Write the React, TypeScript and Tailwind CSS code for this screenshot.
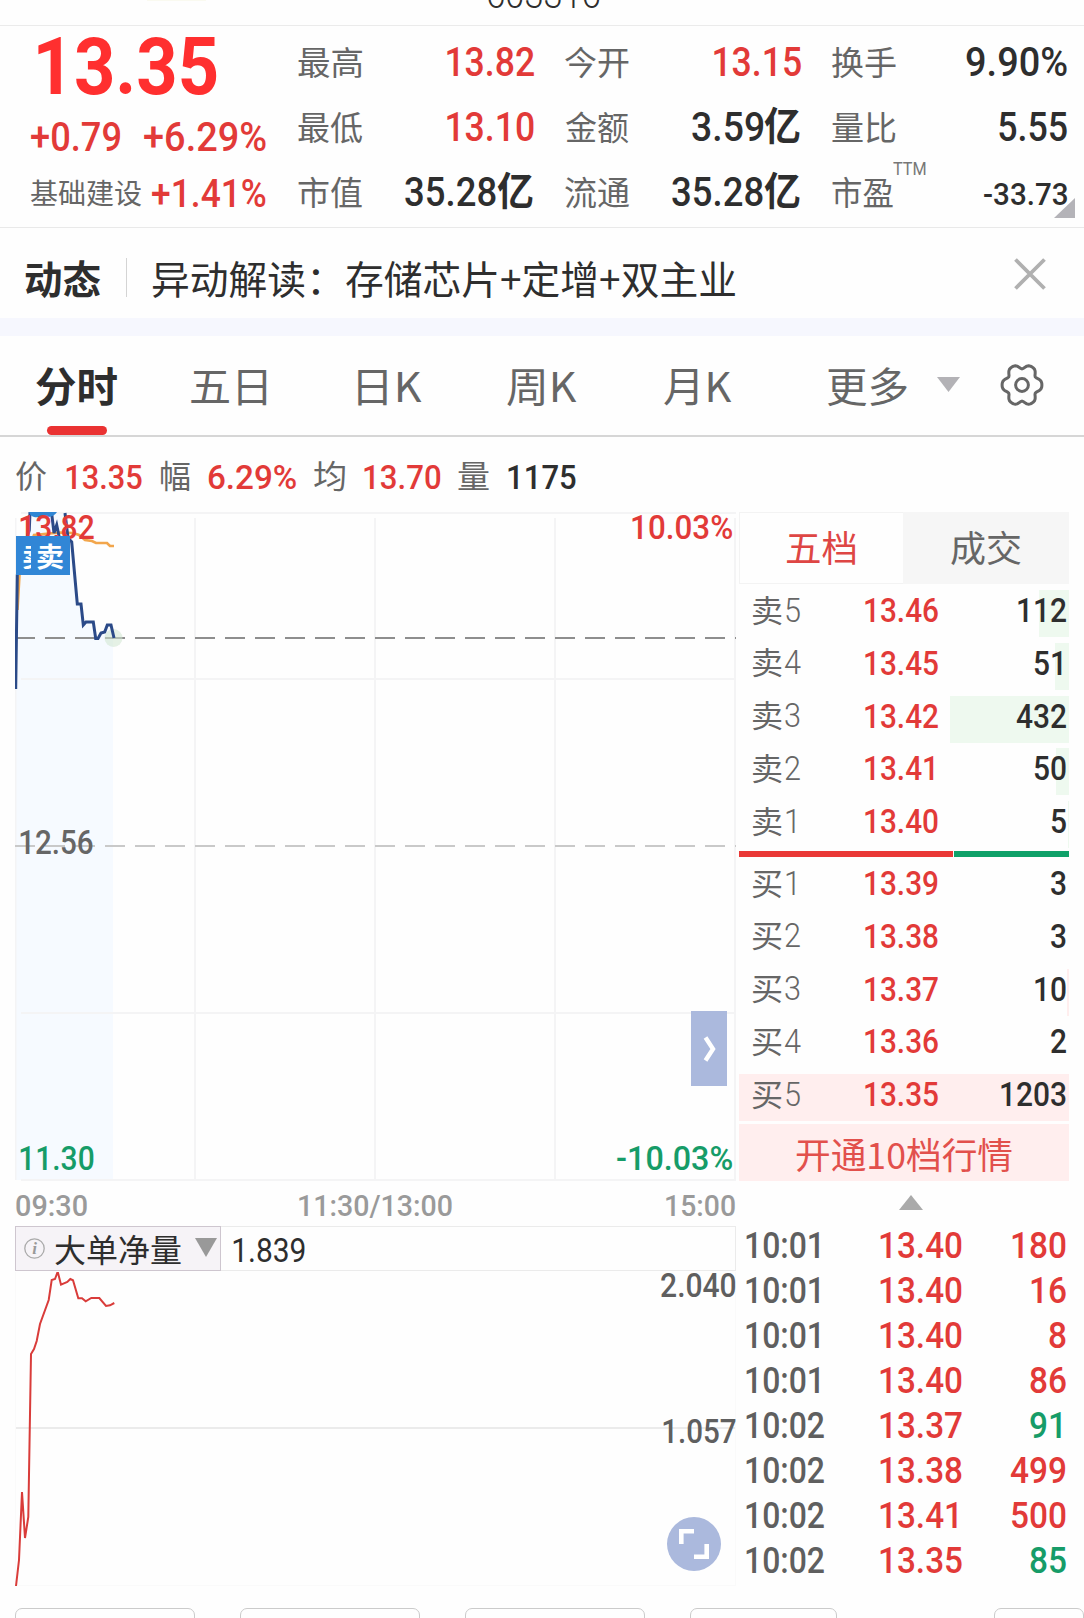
import { useLayoutEffect, useRef, useState } from "react";
import type { ReactNode } from "react";

type FitProps = { t: string; w: number; c: string; adv?: boolean };

/* Text squeezed horizontally to an exact width. By default the visible ink is
   fitted; with `adv` the advance width is fitted instead (tabular columns). */
function Fit({ t, w, c, adv }: FitProps) {
  const ref = useRef<HTMLSpanElement>(null);
  const [tf, setTf] = useState("none");
  useLayoutEffect(() => {
    const el = ref.current;
    const ctx = document.createElement("canvas").getContext("2d");
    if (!el || !ctx) return;
    const s = getComputedStyle(el);
    ctx.font = `${s.fontWeight} ${s.fontSize} ${s.fontFamily}`;
    const m = ctx.measureText(t);
    const left = adv ? 0 : m.actualBoundingBoxLeft;
    const nat = adv ? m.width : m.actualBoundingBoxLeft + m.actualBoundingBoxRight;
    const k = w / nat;
    setTf(`translateX(${left * k}px) scaleX(${k})`);
  }, [t, w, adv]);
  return (
    <span className="block shrink-0 whitespace-nowrap leading-none" style={{ width: w }}>
      <span ref={ref} className={`inline-block origin-left leading-none ${c}`} style={{ transform: tf }}>
        {t}
      </span>
    </span>
  );
}

const CJK = "font-['Noto_Sans_CJK_SC',sans-serif]";
const NUM = "font-['Roboto','Noto_Sans_CJK_SC',sans-serif]";
const statLabel = `${CJK} text-[33px] text-[#666]`;
const red = "text-[#e23a38]";
const green = "text-[#169c68]";
const ink = "text-[#2e2e2e]";

function Stat({ label, lw, sup, children }: { label: string; lw: number; sup?: string; children: ReactNode }) {
  return (
    <div className="flex h-[65px] items-center justify-between">
      <div className="relative -top-[1px]">
        <Fit t={label} w={lw} c={statLabel} />
        {sup && (
          <div className="absolute -top-[15px] left-[61px]">
            <Fit t={sup} w={33} c={`${NUM} text-[18px] text-[#777]`} />
          </div>
        )}
      </div>
      {children}
    </div>
  );
}

function Yi({ n, w }: { n: string; w: number }) {
  return (
    <div className="flex items-center gap-[1px] pr-px">
      <Fit t={n} w={w - 38} c={`${NUM} text-[41px] font-medium ${ink}`} />
      <div className="relative -top-[4px]">
        <Fit t="亿" w={36} c={`${CJK} text-[39px] font-bold ${ink}`} />
      </div>
    </div>
  );
}

const big = `${NUM} text-[41px] font-medium`;

function Header() {
  return (
    <section className="flex h-[202px] border-b border-[#e9e9e9] pt-[4px]">
      <div className="w-[298px] shrink-0">
        <div className="flex h-[73px] items-center pl-[38px] pt-[2px]">
          <Fit t="13.35" w={179} c={`${NUM} text-[79px] font-bold text-[#ff2f2f]`} />
        </div>
        <div className="flex h-[67px] items-center gap-[24px] pl-[31px] pt-[2px]">
          <Fit t="+0.79" w={89} c={`${big} ${red}`} />
          <Fit t="+6.29%" w={122} c={`${big} ${red}`} />
        </div>
        <div className="flex h-[46px] items-center justify-between pl-[31px] pr-[32px]">
          <div className="relative -top-[1px]"><Fit t="基础建设" w={110} c={`${CJK} text-[28px] text-[#666]`} /></div>
          <div className="relative top-[1px]"><Fit t="+1.41%" w={114} c={`${NUM} text-[38px] font-medium ${red}`} /></div>
        </div>
      </div>
      <div className="w-[236px]">
        <Stat label="最高" lw={64}><Fit t="13.82" w={87} c={`${big} ${red}`} /></Stat>
        <Stat label="最低" lw={64}><Fit t="13.10" w={87} c={`${big} ${red}`} /></Stat>
        <Stat label="市值" lw={64}><Yi n="35.28" w={129} /></Stat>
      </div>
      <div className="ml-[31px] w-[236px]">
        <Stat label="今开" lw={64}><Fit t="13.15" w={87} c={`${big} ${red}`} /></Stat>
        <Stat label="金额" lw={64}><Yi n="3.59" w={109} /></Stat>
        <Stat label="流通" lw={64}><Yi n="35.28" w={129} /></Stat>
      </div>
      <div className="relative ml-[31px] w-[235px]">
        <Stat label="换手" lw={64}><Fit t="9.90%" w={101} c={`${big} ${ink}`} /></Stat>
        <Stat label="量比" lw={64}><Fit t="5.55" w={68} c={`${big} ${ink}`} /></Stat>
        <Stat label="市盈" lw={61} sup="TTM">
          <div className="pt-[3px]"><Fit t="-33.73" w={83} c={`${NUM} text-[31px] font-medium ${ink}`} /></div>
        </Stat>
        <svg className="absolute -right-[8px] top-[168px]" width="21" height="20" viewBox="0 0 21 20">
          <path d="M21 0V20H0Z" fill="#b4b3b8" />
        </svg>
      </div>
    </section>
  );
}

function News() {
  return (
    <section className="flex h-[90px] items-center pl-[25px] pr-[38px] pt-[8px]">
      <Fit t="动态" w={76} c={`${CJK} text-[39px] font-bold ${ink}`} />
      <div className="ml-[25px] h-[39px] w-px bg-[#d4d4d4]" />
      <div className="ml-[26px] grow">
        <Fit t="异动解读：存储芯片+定增+双主业" w={582} c={`${CJK} text-[39px] ${ink}`} />
      </div>
      <svg className="relative -top-[3px]" width="32" height="32" viewBox="0 0 32 32" fill="none" stroke="#b0b0b0" strokeWidth="3.8">
        <path d="M1.5 1.5L30.5 30.5M30.5 1.5L1.5 30.5" />
      </svg>
    </section>
  );
}

const gear =
  Array.from({ length: 72 }, (_, i) => {
    const a = (i * Math.PI) / 36;
    const r = 18.1 + 2.3 * Math.cos(6 * a) - 0.5 * Math.cos(12 * a);
    return `${i ? "L" : "M"}${(22 + r * Math.cos(a)).toFixed(2)} ${(22 + r * 1.05 * Math.sin(a)).toFixed(2)}`;
  }).join("") + "Z";

function Tabs() {
  const tab = `${CJK} text-[41px] text-[#666]`;
  return (
    <nav className="relative flex h-[101px] items-center border-b-2 border-[#d6d6d6] pl-[36px] pb-[2px]">
      <Fit t="分时" w={81} c={`${CJK} text-[41px] font-bold ${ink}`} />
      <div className="ml-[74px]"><Fit t="五日" w={76} c={tab} /></div>
      <div className="ml-[91px]"><Fit t="日K" w={64} c={tab} /></div>
      <div className="ml-[85px]"><Fit t="周K" w={70} c={tab} /></div>
      <div className="ml-[87px]"><Fit t="月K" w={68} c={tab} /></div>
      <div className="ml-[95px]"><Fit t="更多" w={80} c={tab} /></div>
      <svg className="ml-[30px]" width="23" height="15" viewBox="0 0 23 15"><path d="M0 0H23L11.5 15Z" fill="#b3b2b6" /></svg>
      <svg className="ml-[40px]" width="44" height="44" viewBox="0 0 44 44" fill="none" stroke="#666" strokeWidth="3">
        <path d={gear} strokeLinejoin="round" />
        <circle cx="22" cy="22" r="6.4" />
      </svg>
      <div className="absolute bottom-0 left-[47px] h-[9px] w-[60px] rounded-full bg-[#ea3232]" />
    </nav>
  );
}

function Quote() {
  const l = `${CJK} text-[32px] text-[#666]`;
  const n = `${NUM} text-[33px] font-medium`;
  const up = "relative -top-[3px]";
  return (
    <div className="flex h-[75px] items-center pl-[16px] pt-[5px]">
      <div className={up}><Fit t="价" w={31} c={l} /></div>
      <div className="ml-[19px]"><Fit t="13.35" w={76} c={`${n} ${red}`} /></div>
      <div className={`${up} ml-[19px]`}><Fit t="幅" w={29} c={l} /></div>
      <div className="ml-[18px]"><Fit t="6.29%" w={88} c={`${n} ${red}`} /></div>
      <div className={`${up} ml-[18px]`}><Fit t="均" w={31} c={l} /></div>
      <div className="ml-[19px]"><Fit t="13.70" w={77} c={`${n} ${red}`} /></div>
      <div className={`${up} ml-[17px]`}><Fit t="量" w={31} c={l} /></div>
      <div className="ml-[19px]"><Fit t="1175" w={68} c={`${n} ${ink}`} /></div>
    </div>
  );
}

function PriceChart() {
  const n = `${NUM} text-[33px] font-medium`;
  return (
    <div className="relative h-[669px] w-[721px]">
      <svg className="block" width="721" height="669" viewBox="15 512 721 669" fill="none">
        <path d="M16 1180V640L17.5 575L29.5 512H66L72 542L77 604H81L83 625L86 622H93L96 638L98 638L105 632L107 625H111L113 638V1180Z" fill="#f6faff" />
        <path d="M21 513H736M21 679H736M21 1013H736M21 1180H736M15.5 518V1180M195 518V1180M375 518V1180M555 518V1180M735 518V1180" stroke="#f4f4f5" strokeWidth="2" />
        <path d="M15 638H736" stroke="#8e8e8e" strokeWidth="2" strokeDasharray="20 10" />
        <path d="M15 846H736" stroke="#c9c9c9" strokeWidth="2" strokeDasharray="20 10" />
        <circle cx="113.5" cy="638" r="9" fill="#cfe6cf" fillOpacity="0.55" />
        <path d="M17.5 610L19.5 575L34 535L60 532.5L73 533L79 535L85 540L92 541L96 543H107L110 546H114" stroke="#f2a64c" strokeWidth="2.6" />
        <path d="M15.7 689L17.3 575L29.3 530L30 512M51.5 512L54 533L56.7 525L60 541M65 513L68 538L71.7 542L77.3 604H81L83.3 625L86 622H93.3L95.7 638.5H98L101 633L104.7 632L107.3 625H111L114 638" stroke="#2b4a88" strokeWidth="3" />
        <path d="M29 512H57Q54 517 47 517Q43 517 41 516Q38 518 34 517Q30 516 29 512Z" fill="#2f86d4" />
      </svg>
      <div className="absolute left-[5px] top-[-1px]"><Fit t="13.82" w={74} c={`${n} ${red}`} /></div>
      <div className="absolute left-px top-[24px] flex h-[39px] w-[54px] items-center bg-[#3186d6] pb-px pl-[7px]">
        <div className="w-[8px] overflow-hidden"><Fit t="卖" w={25} c={`${CJK} text-[27px] font-bold text-white`} /></div>
        <div className="ml-[6px]"><Fit t="卖" w={26} c={`${CJK} text-[27px] font-bold text-white`} /></div>
      </div>
      <div className="absolute right-[4px] top-[-1px]"><Fit t="10.03%" w={100} c={`${n} ${red}`} /></div>
      <div className="absolute left-[5px] top-[314px]"><Fit t="12.56" w={73} c={`${n} text-[#666]`} /></div>
      <div className="absolute left-[5px] top-[630px]"><Fit t="11.30" w={74} c={`${n} ${green}`} /></div>
      <div className="absolute right-[4px] top-[630px]"><Fit t="-10.03%" w={115} c={`${n} ${green}`} /></div>
      <div className="absolute right-[9px] top-[499px] flex h-[75px] w-[36px] items-center justify-center bg-[#abb9dd]">
        <svg className="ml-[2px]" width="14" height="26" viewBox="0 0 14 26" fill="none" stroke="#fff" strokeWidth="4.4"><path d="M2.5 1.5L10 13L2.5 24.5" /></svg>
      </div>
    </div>
  );
}

function Indicator() {
  const n = `${NUM} text-[33px] text-[#5f5f5f]`;
  return (
    <div className="w-[721px]">
      <div className="flex h-[45px] items-stretch border border-[#ebebeb]">
        <div className="-m-px flex w-[206px] items-center border border-[#cec6cf] bg-[#f6f3f7] pl-[8px]">
          <svg width="21" height="21" viewBox="0 0 21 21">
            <circle cx="10.5" cy="10.5" r="9.7" fill="none" stroke="#aaa" strokeWidth="1.3" />
            <text x="10.5" y="16" textAnchor="middle" fontSize="17" fontStyle="italic" fontWeight="bold" fontFamily="Liberation Serif, serif" fill="#999">i</text>
          </svg>
          <div className="relative -top-px ml-[10px]"><Fit t="大单净量" w={126} c={`${CJK} text-[32px] ${ink}`} /></div>
          <svg className="relative -top-px ml-[14px]" width="22" height="19" viewBox="0 0 22 19"><path d="M0 0H22L11 19Z" fill="#999" /></svg>
        </div>
        <div className="ml-[13px] flex items-center pt-[3px]"><Fit t="1.839" w={72} c={`${NUM} text-[33px] ${ink}`} /></div>
      </div>
      <div className="relative h-[315px] pt-px">
        <svg className="block" width="721" height="314" viewBox="15 1272 721 314" fill="none">
          <path d="M16 1428H736" stroke="#ebebeb" strokeWidth="2" />
          <path d="M15.5 1272V1586M735.5 1272V1586M15 1585.5H736" stroke="#fafafa" />
          <path d="M16 1586L19 1560L22 1492L25 1538L28.3 1517L31 1354L34 1349L36.7 1341L40 1324L48.7 1300L51.7 1280L55 1279L57.7 1271.7L61 1284.7L67.3 1282L70.3 1279L73 1280.3L78.3 1298.3H82L85.7 1301.3L91.3 1298H99.3L106 1306L110 1305.3L114.3 1303" stroke="#d93c3a" strokeWidth="2" />
        </svg>
        <div className="absolute right-0 top-[-2px]"><Fit t="2.040" w={75} c={`${n} font-medium`} /></div>
        <div className="absolute right-0 top-[144px]"><Fit t="1.057" w={73} c={`${n} font-medium`} /></div>
        <div className="absolute right-[15px] top-[246px] flex h-[54px] w-[54px] items-center justify-center rounded-full bg-[#abb9dd]">
          <svg width="30" height="30" viewBox="0 0 30 30" fill="none" stroke="#fff" strokeWidth="4.6"><path d="M2.3 15V2.3H15M27.7 15V27.7H15" /></svg>
        </div>
      </div>
    </div>
  );
}

const sells: [string, string, string, number][] = [
  ["5", "13.46", "112", 30],
  ["4", "13.45", "51", 14],
  ["3", "13.42", "432", 119],
  ["2", "13.41", "50", 13],
  ["1", "13.40", "5", 1],
];
const buys: [string, string, string, number][] = [
  ["1", "13.39", "3", 0],
  ["2", "13.38", "3", 0],
  ["3", "13.37", "10", 2],
  ["4", "13.36", "2", 0],
  ["5", "13.35", "1203", 330],
];
const trades: [string, string, string, boolean][] = [
  ["10:01", "13.40", "180", true],
  ["10:01", "13.40", "16", true],
  ["10:01", "13.40", "8", true],
  ["10:01", "13.40", "86", true],
  ["10:02", "13.37", "91", false],
  ["10:02", "13.38", "499", true],
  ["10:02", "13.41", "500", true],
  ["10:02", "13.35", "85", false],
];

function Level({ side, row, tint }: { side: string; row: [string, string, string, number]; tint: string }) {
  const [lv, price, qty, bar] = row;
  return (
    <div className="relative h-[52.8px]">
      <div className={`absolute right-0 top-0 h-[47px] ${tint}`} style={{ width: bar }} />
      <div className="relative flex h-[40px] items-center pl-[13px] pr-[2px]">
        <div className="relative -top-[2px]"><Fit t={side} w={30} c={`${CJK} text-[31px] text-[#666]`} /></div>
        <div className="ml-[2px]"><Fit t={lv} w={17} adv c={`${NUM} text-[33px] font-light text-[#666]`} /></div>
        <div className="ml-[62px] grow"><Fit t={price} w={76} adv c={`${NUM} text-[34px] font-medium ${red}`} /></div>
        <Fit t={qty} w={qty.length * 17} adv c={`${NUM} text-[34px] font-medium ${ink}`} />
      </div>
    </div>
  );
}

function Side() {
  return (
    <aside className="ml-[3px] w-[330px]">
      <div className="flex h-[72px] leading-none">
        <div className="flex w-[164px] items-center justify-center border border-r-0 border-[#f3f3f3] pb-[4px]">
          <Fit t="五档" w={69} c={`${CJK} text-[36px] text-[#de4644]`} />
        </div>
        <div className="flex grow items-center justify-center bg-[#f6f6f6] pb-[4px]">
          <Fit t="成交" w={70} c={`${CJK} text-[36px] text-[#666]`} />
        </div>
      </div>
      <div className="h-[267px] pt-[6px]">
        {sells.map((r) => <Level key={r[0]} side="卖" row={r} tint="bg-[#eef9ef]" />)}
      </div>
      <div className="flex h-[6px] gap-px">
        <div className="w-[214px] bg-[#ea3836]" />
        <div className="grow bg-[#0fa169]" />
      </div>
      <div className="h-[267px] pt-[6px]">
        {buys.map((r) => <Level key={r[0]} side="买" row={r} tint="bg-[#ffeeee]" />)}
      </div>
      <div className="flex h-[57px] items-center justify-center bg-[#ffeeee]">
        <Fit t="开通10档行情" w={216} c={`${CJK} text-[36px] text-[#e2504c]`} />
      </div>
      <div className="flex h-[42px] items-center justify-center pt-px">
        <svg className="ml-[13px]" width="24" height="15" viewBox="0 0 24 15"><path d="M12 0L24 15H0Z" fill="#aaa" /></svg>
      </div>
      <div>
        {trades.map(([time, price, qty, up], i) => (
          <div key={i} className="flex h-[45px] items-center pl-[5px] pr-[2px]">
            <Fit t={time} w={81} adv c={`${NUM} text-[37px] text-[#5f5f5f] font-medium`} />
            <div className="ml-[53px] grow"><Fit t={price} w={85} adv c={`${NUM} text-[37px] font-medium ${red}`} /></div>
            <Fit t={qty} w={qty.length * 19} adv c={`${NUM} text-[37px] font-medium ${up ? red : green}`} />
          </div>
        ))}
      </div>
    </aside>
  );
}

export default function App() {
  const axis = `${NUM} text-[30px] font-medium text-[#9a9a9a]`;
  const card = "h-[24px] shrink-0 rounded-[7px] border border-[#cbcbcb]";
  return (
    <div className="h-[1618px] w-[1084px] overflow-hidden bg-[#fefefe]">
      <div className="relative flex h-[26px] items-end justify-center border-b border-[#ebebeb] pb-[11px] pl-[4px]">
        <Fit t="603316" w={112} c={`${NUM} text-[38px] font-light ${ink}`} />
        <div className="absolute left-[147px] top-0 h-px w-[59px] bg-[#fafaf0]" />
      </div>
      <Header />
      <News />
      <div className="h-[18px] bg-[#f6f7fe]" />
      <Tabs />
      <Quote />
      <div className="flex h-[1074px] pl-[15px]">
        <div className="w-[721px]">
          <PriceChart />
          <div className="flex h-[45px] items-center justify-between pl-px pt-[5px]">
            <Fit t="09:30" w={71} c={axis} />
            <div className="mr-[2px]"><Fit t="11:30/13:00" w={153} c={axis} /></div>
            <div className="mr-px"><Fit t="15:00" w={69} c={axis} /></div>
          </div>
          <Indicator />
        </div>
        <Side />
      </div>
      <div className="flex pl-[15px] pt-[22px]">
        <div className={`${card} w-[180px]`} />
        <div className={`${card} ml-[45px] w-[180px]`} />
        <div className={`${card} ml-[45px] w-[180px]`} />
        <div className={`${card} ml-[45px] w-[147px]`} />
        <div className={`${card} ml-[157px] w-[90px]`} />
      </div>
    </div>
  );
}
